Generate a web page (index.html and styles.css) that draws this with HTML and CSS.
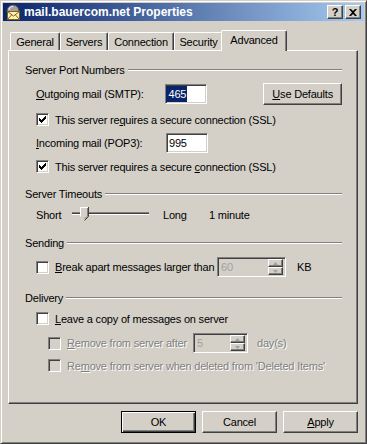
FILE: index.html
```html
<!DOCTYPE html>
<html lang="en">
<head>
    <meta charset="UTF-8">
    <title>mail.bauercom.net Properties</title>
    <link rel="stylesheet" href="styles.css">
</head>
<body>
    <div class="window">
        <!-- Barra de título -->
        <div class="titlebar">
            <svg class="app-icon" width="16" height="16" viewBox="0 0 16 16">
                <path d="M2 8 C2 3 5 1 8 1 C11 1 14 3 14 8 Z" fill="#a0a0a0" stroke="#505050" stroke-width="1"/>
                <path d="M4 6 C4 4 6 2.5 8 2.5" fill="none" stroke="#e8e8e8" stroke-width="1.2"/>
                <rect x="2.5" y="7.5" width="12" height="8" fill="#fff3b0" stroke="#806020"/>
                <path d="M2.5 7.5 L8.5 12 L14.5 7.5 M2.5 15.5 L6.5 11 M14.5 15.5 L10.5 11" fill="none" stroke="#806020"/>
            </svg>
            <span class="title">mail.bauercom.net Properties</span>
            <div class="caption-buttons">
                <div class="cap-btn help">?</div>
                <div class="cap-btn close">
                    <svg width="8" height="7" viewBox="0 0 8 7">
                        <path d="M0 0h2l2 2 2-2h2L5 3.5 8 7H6L4 5 2 7H0l3-3.5z" fill="#000"/>
                    </svg>
                </div>
            </div>
        </div>

        <div class="dialog">
            <!-- Pestañas -->
            <div class="tabs">
                <div class="tab tab-general">General</div>
                <div class="tab tab-servers">Servers</div>
                <div class="tab tab-connection">Connection</div>
                <div class="tab tab-security">Security</div>
                <div class="tab tab-advanced active">Advanced</div>
            </div>

            <div class="panel">
                <div class="group-title"><span>Server Port Numbers</span><i class="etch"></i></div>

                <div class="row field-row mt-6">
                    <span class="field-label"><u>O</u>utgoing mail (SMTP):</span>
                    <div class="textbox"><span class="selection">465</span></div>
                    <div class="btn btn-defaults"><u>U</u>se Defaults</div>
                </div>

                <div class="row check-row mt-7">
                    <span class="checkbox"><svg width="11" height="11" viewBox="1 1 11 11"><path d="M3 5h1v3H3zM4 6h1v3H4zM5 7h1v3H5zM6 6h1v3H6zM7 5h1v3H7zM8 4h1v3H8zM9 3h1v3H9z" fill="#000"/></svg></span>
                    <span class="check-label">This server re<u>q</u>uires a secure connection (SSL)</span>
                </div>

                <div class="row field-row short mt-6">
                    <span class="field-label"><u>I</u>ncoming mail (POP3):</span>
                    <div class="textbox">995</div>
                </div>

                <div class="row check-row mt-6">
                    <span class="checkbox"><svg width="11" height="11" viewBox="1 1 11 11"><path d="M3 5h1v3H3zM4 6h1v3H4zM5 7h1v3H5zM6 6h1v3H6zM7 5h1v3H7zM8 4h1v3H8zM9 3h1v3H9z" fill="#000"/></svg></span>
                    <span class="check-label">This server requires a secure <u>c</u>onnection (SSL)</span>
                </div>

                <div class="group-title mt-13"><span>Server Timeouts</span><i class="etch"></i></div>

                <div class="row slider-row mt-4">
                    <span class="slider-min">Short</span>
                    <div class="slider">
                        <div class="slider-track"></div>
                        <svg class="slider-thumb" width="9" height="14" viewBox="0 0 9 14">
                            <path d="M0.5 0.5 H8.5 V9.5 L4.5 13.5 L0.5 9.5 Z" fill="#d4d0c8"/>
                            <path d="M0.5 9.5 V0.5 H8" fill="none" stroke="#fff"/>
                            <path d="M8.5 0 V9.5 L4.5 13.5" fill="none" stroke="#404040"/>
                            <path d="M7.5 1 V9 L4.5 12" fill="none" stroke="#808080"/>
                        </svg>
                    </div>
                    <span class="slider-max">Long</span>
                    <span>1 minute</span>
                </div>

                <div class="group-title mt-11"><span>Sending</span><i class="etch"></i></div>

                <div class="row spin-row mt-7">
                    <span class="checkbox"></span>
                    <span class="check-label send-label"><u>B</u>reak apart messages larger than</span>
                    <div class="spin spin-kb">
                        <span class="spin-value">60</span>
                        <div class="spin-buttons">
                            <div class="spin-btn"><svg width="5" height="3" viewBox="0 0 5 3"><path d="M2.5 0 L5 3 H0 Z" fill="#a0a0a0"/></svg></div>
                            <div class="spin-btn"><svg width="5" height="3" viewBox="0 0 5 3"><path d="M0 0 H5 L2.5 3 Z" fill="#a0a0a0"/></svg></div>
                        </div>
                    </div>
                    <span class="unit-kb">KB</span>
                </div>

                <div class="group-title mt-14"><span>Delivery</span><i class="etch"></i></div>

                <div class="row check-row mt-6">
                    <span class="checkbox"></span>
                    <span class="check-label"><u>L</u>eave a copy of messages on server</span>
                </div>

                <div class="row spin-row sub mt-7">
                    <span class="checkbox disabled"></span>
                    <span class="check-label disabled days-label"><u>R</u>emove from server after</span>
                    <div class="spin spin-days">
                        <span class="spin-value">5</span>
                        <div class="spin-buttons">
                            <div class="spin-btn"><svg width="5" height="3" viewBox="0 0 5 3"><path d="M2.5 0 L5 3 H0 Z" fill="#a0a0a0"/></svg></div>
                            <div class="spin-btn"><svg width="5" height="3" viewBox="0 0 5 3"><path d="M0 0 H5 L2.5 3 Z" fill="#a0a0a0"/></svg></div>
                        </div>
                    </div>
                    <span class="unit-days disabled">day(s)</span>
                </div>

                <div class="row check-row sub mt-5">
                    <span class="checkbox disabled"></span>
                    <span class="check-label disabled">Re<u>m</u>ove from server when deleted from 'Deleted Items'</span>
                </div>
            </div>

            <!-- Botones del diálogo -->
            <div class="dialog-buttons">
                <div class="btn btn-default">OK</div>
                <div class="btn">Cancel</div>
                <div class="btn"><u>A</u>pply</div>
            </div>
        </div>
    </div>
</body>
</html>
```

FILE: styles.css
```css
/* Reset básico */
* {
    margin: 0;
    padding: 0;
    box-sizing: border-box;
}

body {
    background: #d4d0c8;
    font-family: "Liberation Sans", Arial, sans-serif;
    font-size: 11px;
    letter-spacing: -0.2px;
    color: #000;
}

u {
    text-decoration: underline;
    text-underline-offset: 1px;
}

/* Marco de la ventana */
.window {
    width: 367px;
    height: 444px;
    padding: 2px;
    background: #d4d0c8;
    border: 1px solid;
    border-color: #d4d0c8 #404040 #404040 #d4d0c8;
    box-shadow: inset 1px 1px #fff, inset -1px -1px #808080;
}

.titlebar {
    height: 18px;
    display: flex;
    align-items: center;
    padding: 0 3px 0 2px;
    background: linear-gradient(to right, #0a246a, #a6caf0);
}

.app-icon {
    flex: none;
}

.title {
    margin-left: 3px;
    color: #fff;
    font-weight: bold;
    font-size: 12px;
    letter-spacing: 0;
}

.caption-buttons {
    margin-left: auto;
    display: flex;
    gap: 2px;
}

.cap-btn {
    width: 16px;
    height: 14px;
    display: flex;
    align-items: center;
    justify-content: center;
    background: #d4d0c8;
    border: 1px solid;
    border-color: #fff #404040 #404040 #fff;
    box-shadow: inset -1px -1px #808080;
    font-weight: bold;
    font-size: 11px;
    letter-spacing: 0;
}

.cap-btn.help {
    padding-bottom: 1px;
}

/* Contenido del diálogo */
.dialog {
    padding: 9px 6px 0 5px;
}

.tabs {
    display: flex;
    align-items: flex-end;
    height: 20px;
    padding-left: 2px;
}

.tab {
    height: 18px;
    display: flex;
    align-items: center;
    justify-content: center;
    padding-top: 1px;
    border-top: 1px solid #fff;
    border-left: 1px solid #fff;
    border-right: 1px solid #404040;
    border-radius: 2px 2px 0 0;
    box-shadow: inset -1px 0 #808080;
}

.tab-general { width: 50px; }
.tab-servers { width: 48px; }
.tab-connection { width: 66px; }
.tab-security { width: 49px; }
.tab-advanced { width: 62px; }

.tab.active {
    position: relative;
    z-index: 1;
    width: 66px;
    height: 21px;
    margin: 0 -2px -1px -2px;
    padding-top: 0;
    padding-bottom: 2px;
    background: #d4d0c8;
}

.panel {
    width: 350px;
    height: 354px;
    padding: 12px 15px 0 16px;
    border: 1px solid;
    border-color: #fff #404040 #404040 #fff;
    box-shadow: inset -1px -1px #808080;
}

.group-title {
    height: 14px;
    display: flex;
    align-items: center;
}

.etch {
    flex: 1;
    height: 2px;
    margin-left: 3px;
    border-top: 1px solid #808080;
    border-bottom: 1px solid #fff;
}

.mt-4 { margin-top: 4px; }
.mt-5 { margin-top: 5px; }
.mt-6 { margin-top: 6px; }
.mt-7 { margin-top: 7px; }
.mt-11 { margin-top: 11px; }
.mt-13 { margin-top: 13px; }
.mt-14 { margin-top: 14px; }

.row {
    display: flex;
    align-items: center;
    padding-left: 11px;
}

.row.sub {
    padding-left: 23px;
}

.field-row {
    height: 22px;
}

.field-row.short {
    height: 20px;
}

.field-label {
    width: 130px;
}

.textbox {
    width: 42px;
    height: 20px;
    display: flex;
    align-items: center;
    padding-left: 2px;
    background: #fff;
    border: 1px solid;
    border-color: #808080 #fff #fff #808080;
    box-shadow: inset 1px 1px #404040, inset -1px -1px #d4d0c8;
}

.selection {
    height: 16px;
    line-height: 16px;
    margin-left: -2px;
    padding: 0 1px 0 2px;
    background: #0a246a;
    color: #fff;
}

.btn {
    width: 75px;
    height: 22px;
    display: flex;
    align-items: center;
    justify-content: center;
    background: #d4d0c8;
    border: 1px solid;
    border-color: #fff #404040 #404040 #fff;
    box-shadow: inset -1px -1px #808080;
}

.btn-defaults {
    width: 79px;
    margin-left: 56px;
}

.btn-default {
    border-color: #000;
    box-shadow: inset 1px 1px #fff, inset -1px -1px #404040, inset -2px -2px #808080;
}

.check-row {
    height: 15px;
}

.checkbox {
    flex: none;
    width: 13px;
    height: 13px;
    background: #fff;
    border: 1px solid;
    border-color: #808080 #fff #fff #808080;
    box-shadow: inset 1px 1px #404040, inset -1px -1px #d4d0c8;
}

.checkbox svg {
    display: block;
}

.checkbox.disabled {
    background: #d4d0c8;
}

.check-label {
    margin-left: 6px;
    white-space: nowrap;
}

.disabled {
    color: #808080;
    text-shadow: 1px 1px 0 #fff;
}

/* Control deslizante */
.slider-row {
    height: 20px;
}

.slider-min {
    width: 36px;
}

.slider {
    position: relative;
    width: 77px;
    height: 20px;
}

.slider-track {
    margin-top: 7px;
    height: 3px;
    border-top: 1px solid #808080;
    border-bottom: 1px solid #fff;
    background: #404040;
}

.slider-thumb {
    position: absolute;
    left: 8px;
    top: 2px;
}

.slider-max {
    width: 46px;
    margin-left: 14px;
}

/* Campos numéricos */
.spin-row {
    height: 20px;
}

.send-label {
    width: 162px;
}

.days-label {
    width: 126px;
}

.spin {
    height: 20px;
    display: flex;
    align-items: center;
    padding: 2px;
    background: #d4d0c8;
    border: 1px solid;
    border-color: #808080 #fff #fff #808080;
    box-shadow: inset 1px 1px #404040, inset -1px -1px #d4d0c8;
}

.spin-kb {
    width: 69px;
}

.spin-days {
    width: 55px;
}

.spin-value {
    flex: 1;
    padding-left: 1px;
    color: #a0a0a0;
}

.spin-buttons {
    width: 15px;
    height: 16px;
    display: flex;
    flex-direction: column;
}

.spin-btn {
    flex: 1;
    display: flex;
    align-items: center;
    justify-content: center;
    border: 1px solid;
    border-color: #fff #404040 #404040 #fff;
    box-shadow: inset -1px -1px #808080;
}

.spin-btn svg {
    display: block;
}

.unit-kb {
    margin-left: 11px;
}

.unit-days {
    margin-left: 9px;
}

.dialog-buttons {
    display: flex;
    justify-content: flex-end;
    gap: 6px;
    margin-top: 7px;
}
```
